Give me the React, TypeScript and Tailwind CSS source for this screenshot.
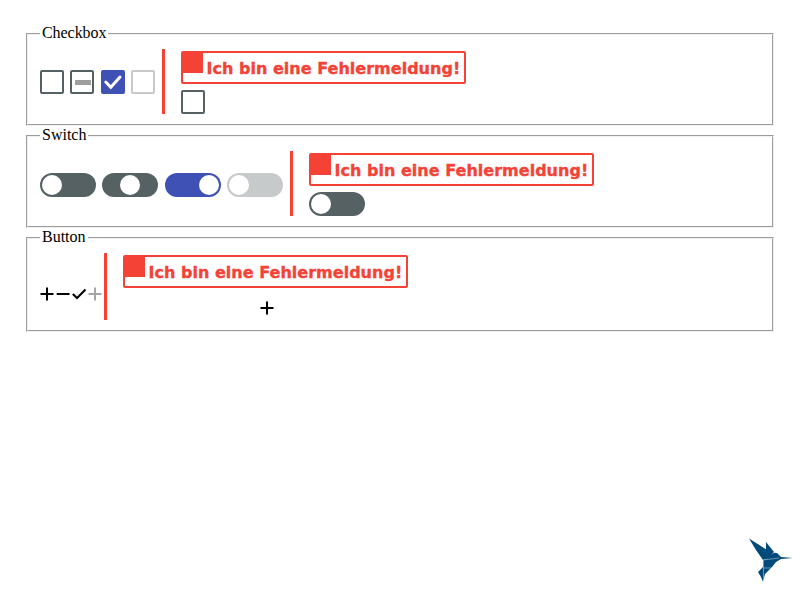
import type { ReactNode } from "react";

function Group({ title, height, legend = "", children }: { title: string; height: string; legend?: string; children: ReactNode }) {
  return (
    <fieldset className={`mx-0 border-2 border-[#f0f0f0] px-3 [border-style:groove] ${height}`}>
      <legend className={`h-[18px] px-0.5 text-base leading-[16px] ${legend}`}>{title}</legend>
      <div className="flex">{children}</div>
    </fieldset>
  );
}

function Box({ className = "border-[#566164]", children }: { className?: string; children?: ReactNode }) {
  return (
    <span className={`flex size-6 shrink-0 items-center justify-center rounded-[2px] border-2 ${className}`}>
      {children}
    </span>
  );
}

function Toggle({ className }: { className: string }) {
  return (
    <span className={`flex h-6 w-14 shrink-0 items-center rounded-full px-0.5 ${className}`}>
      <span className="size-5 rounded-full bg-white" />
    </span>
  );
}

function Plus({ className = "text-black" }: { className?: string }) {
  return (
    <svg className={`size-4 shrink-0 ${className}`} viewBox="0 0 16 16" fill="none" stroke="currentColor" strokeWidth="2">
      <path d="M.5 8H13.5M7 1.5V14.5" />
    </svg>
  );
}

function ErrorBlock({ height, children }: { height: string; children: ReactNode }) {
  return (
    <div className={`flex flex-col border-l-3 border-[#f44336] pt-0.5 pl-4 ${height}`}>
      <div className="flex h-[33px] w-[285px] rounded-[2px] border-2 border-[#f44336]">
        <span className="size-5 shrink-0 bg-[#f44336]" />
        <span className="pl-[3.5px] font-['DejaVu_Sans',sans-serif] text-base leading-[32px] font-bold tracking-[0.02px] whitespace-nowrap text-[#f44336] [-webkit-text-stroke:0.35px_#f44336]">
          Ich bin eine Fehlermeldung!
        </span>
      </div>
      {children}
    </div>
  );
}

export default function App() {
  return (
    <div className="flex h-[600px] w-[800px] flex-col bg-white px-[26px] pt-[25px] font-['Liberation_Serif',serif] text-black">
      <Group title="Checkbox" height="mb-px h-[101px]" legend="tracking-[-0.06px]">
        <div className="mt-[27px] mr-[7px] flex gap-[6px]">
          <Box />
          <Box>
            <span className="mt-px ml-px h-[5px] w-4 bg-[#9e9e9e]" />
          </Box>
          <Box className="ml-px border-[#3f51b5] bg-[#3f51b5]">
            <svg className="size-5 shrink-0" viewBox="0 0 20 20" fill="none" stroke="white" strokeWidth="3">
              <path d="M2.8 10L7.8 15.2L17 5" strokeLinecap="round" />
            </svg>
          </Box>
          <Box className="border-[#c7caca]" />
        </div>
        <ErrorBlock height="mt-[6px] h-[65px]">
          <div className="mt-[6px]">
            <Box />
          </div>
        </ErrorBlock>
      </Group>
      <Group title="Switch" height="mb-px h-[101px]">
        <div className="mt-7 mr-[7px] flex gap-[6px]">
          <Toggle className="bg-[#566164]" />
          <Toggle className="justify-center bg-[#566164]" />
          <Toggle className="ml-px justify-end bg-[#3f51b5]" />
          <Toggle className="bg-[#c7caca]" />
        </div>
        <ErrorBlock height="mt-[6px] h-[65px]">
          <div className="mt-[6px]">
            <Toggle className="bg-[#566164]" />
          </div>
        </ErrorBlock>
      </Group>
      <Group title="Button" height="h-[103px]">
        <div className="mt-[39px] flex">
          <Plus />
          <svg className="size-4" viewBox="0 0 16 16" fill="none" stroke="currentColor" strokeWidth="2">
            <path d="M.7 8H13.5" />
          </svg>
          <svg className="size-4" viewBox="0 0 16 16" fill="none" stroke="currentColor" strokeWidth="2">
            <path d="M.8 8L5 12L13.5 3.5" />
          </svg>
          <Plus className="text-[#a6a6a6]" />
        </div>
        <ErrorBlock height="mt-[6px] h-[67px]">
          <div className="mt-3 flex justify-center pl-[5px]">
            <Plus />
          </div>
        </ErrorBlock>
      </Group>
      <svg className="mt-auto mr-[-20px] mb-[16px] h-[46px] w-[46px] self-end" viewBox="0 0 46 46" fill="#004b7c">
        <path d="M1 .5L19 12L24 17L19 21L15 22L8 12Z" />
        <path d="M18 4L26 14L22 18L18 12Z" />
        <path d="M19 21L22 17L26 15Q29 14 31 17L33 19L45 20L33 21L28 24L24 29L15 30V22Z" />
        <path d="M15 29H24L17 36L15 44L13 39L10 34Z" />
        <path d="M15 22L31 20M15.5 22V44M15 30H24" fill="none" stroke="white" strokeWidth=".4" />
      </svg>
    </div>
  );
}
